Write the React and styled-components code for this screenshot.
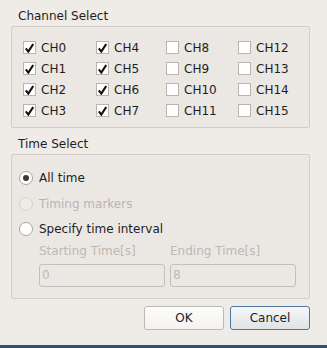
import React from "react";
import styled, { createGlobalStyle } from "styled-components";

const Global = createGlobalStyle`
  html, body { margin: 0; padding: 0; background: #efebe7; }
  body { font-family: "DejaVu Sans", "Liberation Sans", sans-serif; font-size: 12px; color: #1e1e1e; }
`;

const Page = styled.div`
  height: 348px;
  box-sizing: border-box;
  display: flex;
  flex-direction: column;
  padding: 9px 17px 0 11px;
`;

const Section = styled.section`
  display: flex;
  flex-direction: column;
  margin-top: ${(p) => p.$top || 0}px;
`;

const Title = styled.div`
  line-height: 14px;
  height: 14px;
  padding-left: 7px;
  margin-bottom: ${(p) => p.$mb}px;
`;

const Box = styled.div`
  border: 1px solid #d2cdc8;
  border-radius: 2px;
  background: #ebe8e4;
  height: ${(p) => p.$h}px;
  box-sizing: border-box;
  padding: ${(p) => p.$pad};
`;

const ChannelGrid = styled.div`
  display: grid;
  grid-template-columns: 73px 70px 72px auto;
  row-gap: 8px;
`;

const CheckItem = styled.label`
  display: flex;
  align-items: center;
  height: 13px;
  gap: 5px;
  line-height: 14px;
`;

const CheckBox = styled.span`
  width: 13px;
  height: 13px;
  box-sizing: border-box;
  border: 1px solid #bab4ae;
  background: #ffffff;
  display: flex;
  align-items: center;
  justify-content: center;
  flex: none;
`;

const RadioList = styled.div`
  display: flex;
  flex-direction: column;
  gap: 11.5px;
`;

const RadioItem = styled.label`
  display: flex;
  align-items: center;
  gap: 6px;
  height: 14px;
  line-height: 14px;
  color: ${(p) => (p.$disabled ? "#b8b4af" : "#1e1e1e")};
`;

const Radio = styled.span`
  width: 14px;
  height: 14px;
  box-sizing: border-box;
  border-radius: 50%;
  border: 1px solid ${(p) => (p.$disabled ? "#d4d0cb" : "#aaa49e")};
  background: ${(p) => (p.$disabled ? "#eeebe8" : "#ffffff")};
  display: flex;
  align-items: center;
  justify-content: center;
  flex: none;
  &::after {
    content: "";
    display: ${(p) => (p.$checked ? "block" : "none")};
    width: 6px;
    height: 6px;
    border-radius: 50%;
    background: #3a3a3a;
  }
`;

const Interval = styled.div`
  display: grid;
  grid-template-columns: 126px 126px;
  column-gap: 5px;
  row-gap: 6px;
  margin: 8px 0 0 20px;
`;

const FieldLabel = styled.div`
  line-height: 14px;
  color: #bcb8b3;
`;

const Field = styled.div`
  height: 23px;
  box-sizing: border-box;
  border: 1px solid #c4bfba;
  border-radius: 3px;
  background: #ebe8e4;
  color: #bcb8b3;
  line-height: 21px;
  padding-left: 2px;
`;

const Buttons = styled.div`
  display: flex;
  justify-content: flex-end;
  gap: 6px;
  margin-top: 7px;
`;

const Button = styled.button`
  width: 80px;
  height: 24px;
  box-sizing: border-box;
  border-radius: 3px;
  font-family: inherit;
  font-size: 12px;
  color: #1e1e1e;
  padding: 0;
  border: 1px solid ${(p) => (p.$default ? "#4a77a0" : "#beb8b2")};
  background: ${(p) =>
    p.$default
      ? "linear-gradient(#f5f6f7, #dfe3e7)"
      : "linear-gradient(#fcfcfb, #f4f3f1)"};
`;

const BottomBar = styled.div`
  margin: auto -17px 0 -11px;
  height: 3px;
  background: #2d5478;
`;

const Check = () => (
  <svg width="9" height="10" viewBox="0 0 9 10">
    <path d="M0.8 5.4 L3.3 8.6 L8.2 1" fill="none" stroke="#111" strokeWidth="2.1" strokeLinecap="butt" strokeLinejoin="miter" />
  </svg>
);

const order = [0, 4, 8, 12, 1, 5, 9, 13, 2, 6, 10, 14, 3, 7, 11, 15];

export default function App() {
  return (
    <>
      <Global />
      <Page>
        <Section>
          <Title $mb={3}>Channel Select</Title>
          <Box $h={102} $pad="14px 0 0 11px">
            <ChannelGrid>
              {order.map((n) => (
                <CheckItem key={n}>
                  <CheckBox>{n < 8 && <Check />}</CheckBox>
                  CH{n}
                </CheckItem>
              ))}
            </ChannelGrid>
          </Box>
        </Section>
        <Section $top={9}>
          <Title $mb={3}>Time Select</Title>
          <Box $h={145} $pad="16px 0 0 7px">
            <RadioList>
              <RadioItem>
                <Radio $checked />
                All time
              </RadioItem>
              <RadioItem $disabled>
                <Radio $disabled />
                Timing markers
              </RadioItem>
              <RadioItem>
                <Radio />
                Specify time interval
              </RadioItem>
            </RadioList>
            <Interval>
              <FieldLabel>Starting Time[s]</FieldLabel>
              <FieldLabel>Ending Time[s]</FieldLabel>
              <Field>0</Field>
              <Field>8</Field>
            </Interval>
          </Box>
        </Section>
        <Buttons>
          <Button>OK</Button>
          <Button $default>Cancel</Button>
        </Buttons>
        <BottomBar />
      </Page>
    </>
  );
}
